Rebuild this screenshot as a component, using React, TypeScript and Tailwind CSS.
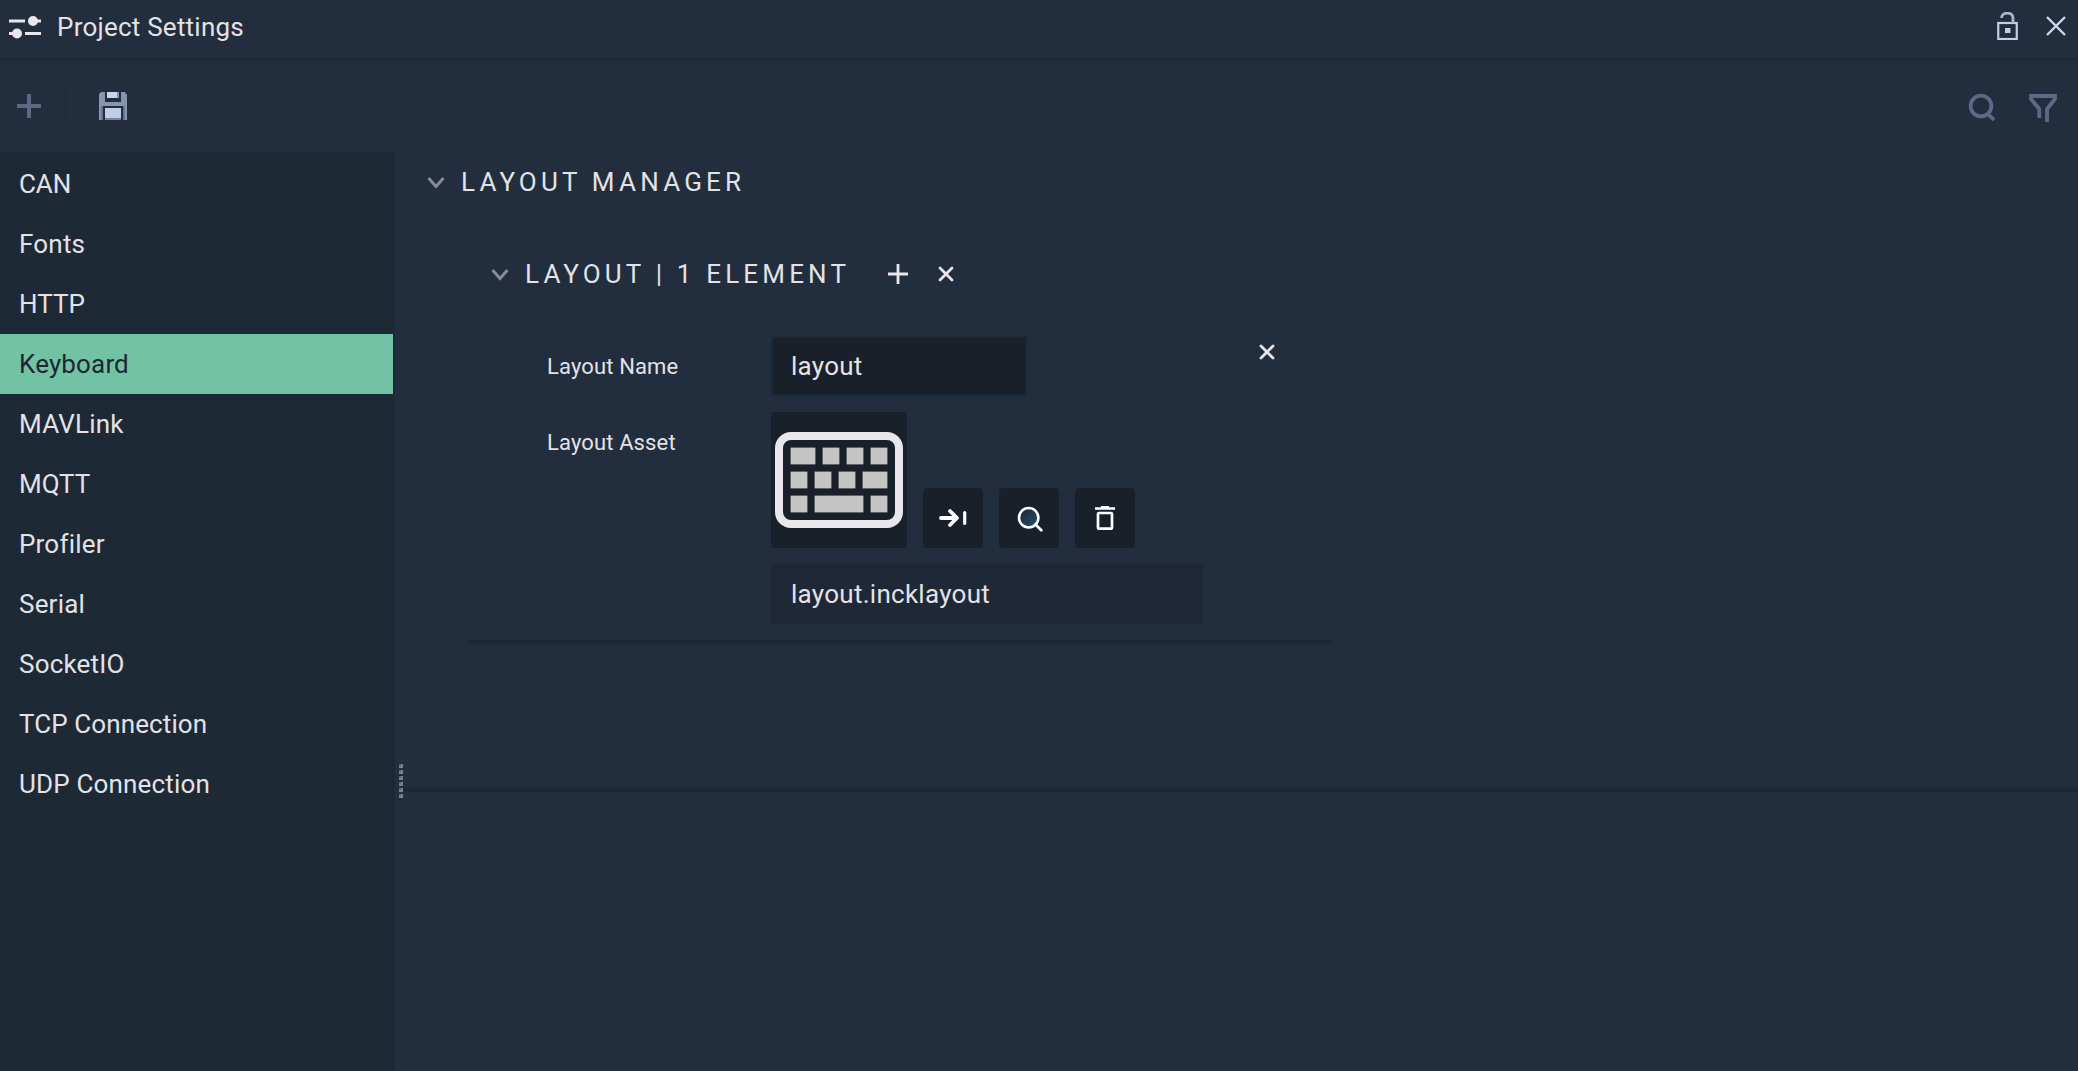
import React from "react";

const items = [
  { label: "CAN", tracking: "tracking-[-0.1px]" },
  { label: "Fonts", tracking: "tracking-[0.2px]" },
  { label: "HTTP", tracking: "" },
  { label: "Keyboard", tracking: "tracking-[0.15px]" },
  { label: "MAVLink", tracking: "tracking-[0.2px]" },
  { label: "MQTT", tracking: "" },
  { label: "Profiler", tracking: "tracking-[0.2px]" },
  { label: "Serial", tracking: "tracking-[0.2px]" },
  { label: "SocketIO", tracking: "tracking-[0.2px]" },
  { label: "TCP Connection", tracking: "tracking-[0.1px]" },
  { label: "UDP Connection", tracking: "tracking-[0.17px]" },
];

const Chevron = () => (
  <svg width="18" height="14" viewBox="0 0 18 14" className="mt-px shrink-0">
    <path d="M1.5 2 L9 10.5 L16.5 2" fill="none" stroke="#868b98" strokeWidth="2.9" />
  </svg>
);

const Cross = () => (
  <svg width="16" height="16" viewBox="0 0 16 16" className="shrink-0">
    <path d="M2 2 L14 14 M14 2 L2 14" stroke="#e9e6ee" strokeWidth="2.8" strokeLinecap="round" />
  </svg>
);

const keys = [
  [0, 0, 24], [32, 0, 16], [56, 0, 16], [80, 0, 16],
  [0, 24, 16], [24, 24, 16], [48, 24, 16], [72, 24, 24],
  [0, 48, 16], [24, 48, 48], [80, 48, 16],
];

const Keyboard = () => (
  <svg width="128" height="96" viewBox="0 0 128 96">
    <rect x="4" y="4" width="120" height="88" rx="12" fill="none" stroke="#e9e6ee" strokeWidth="8" />
    {keys.map(([x, y, w]) => (
      <rect key={`${x}-${y}`} x={15.6 + x} y={15.6 + y} width={w + 0.8} height="16.8" fill="#c5c5c5" />
    ))}
  </svg>
);

export default function App() {
  return (
    <div className="flex h-[1071px] w-[2078px] flex-col overflow-hidden bg-[#222d3d] font-['Roboto',sans-serif] text-[26px] leading-[30px] text-[#e3e2e6]">
      <header className="flex h-[60px] shrink-0 items-center border-b-2 border-[#1e2936] pl-[9px] pr-[12px]">
        <svg width="32" height="24" viewBox="0 0 32 24" className="-mt-1 shrink-0">
          <path d="M0 6h16M28 6h4M0 18.5h4M16 18.5h16" stroke="#e9e6ee" strokeWidth="3" />
          <circle cx="24" cy="6" r="5" fill="#e9e6ee" />
          <circle cx="8" cy="18.5" r="5" fill="#e9e6ee" />
        </svg>
        <h1 className="-mt-1 ml-[16px] flex-1 tracking-[0.23px]">Project Settings</h1>
        <svg width="22" height="28" viewBox="0 0 22 28" className="-mt-1.5 mr-[27px]">
          <rect x="1.25" y="11" width="18.5" height="16" fill="none" stroke="#bfd0ea" strokeWidth="2.2" />
          <rect x="8" y="16" width="5.5" height="5" fill="#bfd0ea" />
          <path d="M4.5 6 C4.5 0 16 -1 16 6 V11" fill="none" stroke="#a9b8d0" strokeWidth="2.8" />
        </svg>
        <svg width="20" height="20" viewBox="0 0 20 20" className="-mt-1.5">
          <path d="M1 1 L19 19 M19 1 L1 19" stroke="#c9daf2" strokeWidth="2.4" />
        </svg>
      </header>
      <div className="flex h-[92px] shrink-0 items-center pl-[17px] pr-[21px]">
        <svg width="24" height="24" viewBox="0 0 24 24">
          <path d="M12 0v24M0 12h24" stroke="#5a6a86" strokeWidth="4" />
        </svg>
        <div className="ml-[28px] h-8 w-1 bg-[#242f40]" />
        <svg width="28" height="28" viewBox="0 0 28 28" className="ml-[26px]">
          <path d="M2 0H6V10H22V0H26L28 3V28H0V2Z" fill="#8796ad" />
          <rect x="6" y="0" width="16" height="8" fill="#222d3d" />
          <rect x="8" y="0" width="10" height="6" fill="#c3d7f0" />
          <rect x="18" y="0" width="2" height="6" fill="#8796ad" />
          <rect x="2" y="14" width="24" height="14" fill="#66758c" />
          <rect x="4" y="14" width="20" height="14" fill="#222d3d" />
          <rect x="6" y="16" width="16" height="10" fill="#bdcfe8" />
          <rect x="6" y="26" width="16" height="2" fill="#75859c" />
        </svg>
        <div className="flex-1" />
        <svg width="28" height="28" viewBox="0 0 28 28" className="mr-[33px] mt-1">
          <circle cx="13" cy="12" r="10.4" fill="none" stroke="#5a6a86" strokeWidth="3.8" />
          <path d="M19.5 19.5 L26 26" stroke="#5a6a86" strokeWidth="3.8" />
        </svg>
        <svg width="28" height="28" viewBox="0 0 28 28" className="mt-1">
          <path d="M10.3 24 V15 L2 5 V2 H26 V5 L18 15 V28" fill="none" stroke="#5a6a86" strokeWidth="3.8" />
        </svg>
      </div>
      <div className="flex min-h-0 flex-1">
        <nav className="w-[395px] shrink-0 rounded-tr bg-[#1e2936] pr-[2px] pt-[2px]">
          {items.map(({ label, tracking }) => (
            <div
              key={label}
              className={`flex h-[60px] items-center pl-[19px] ${tracking} ${label === "Keyboard" ? "bg-[#72c3a5] text-[#1d2731]" : ""}`}
            >
              {label}
            </div>
          ))}
        </nav>
        <div className="flex w-[8px] shrink-0 flex-col items-end gap-[2px] pt-[612px]">
          {[0, 1, 2, 3, 4, 5].map((i) => (
            <div key={i} className="h-1 w-1 bg-[#7b828e]">
              <div className="size-[2px] bg-[#5d6572]" />
            </div>
          ))}
        </div>
        <main className="flex flex-1 flex-col">
          <section className="h-[640px] shrink-0 border-b-4 border-[#1e2936] pl-[24px]">
            <div className="flex h-[60px] items-center">
              <Chevron />
              <h2 className="ml-[16px] tracking-[4.2px]">LAYOUT MANAGER</h2>
            </div>
            <div className="ml-[40px] w-[864px] border-b-4 border-[#1e2936]">
              <div className="mt-[32px] flex h-[60px] items-center pl-[24px]">
                <Chevron />
                <h3 className="ml-[16px] w-[363px] tracking-[4.17px]">LAYOUT | 1 ELEMENT</h3>
                <svg width="20" height="20" viewBox="0 0 20 20">
                  <path d="M10 0v20M0 10h20" stroke="#e9e6ee" strokeWidth="2.8" />
                </svg>
                <div className="ml-[30px]"><Cross /></div>
              </div>
              <div className="mt-[32px] flex pb-4 pl-[80px]">
                <div className="w-[224px] shrink-0 text-[22px] tracking-[0.13px]">
                  <div className="flex h-[60px] items-center pt-px">Layout Name</div>
                  <div className="mt-4 flex h-[60px] items-center pt-px">Layout Asset</div>
                </div>
                <div className="flex w-[488px] flex-col gap-4">
                  <div className="flex h-[60px] w-[256px] items-center border-2 border-[#1e2937] bg-[#1a2029] pl-[18px] tracking-[0.25px]">layout</div>
                  <div className="flex items-end gap-4">
                    <div className="flex size-[136px] items-center justify-center rounded bg-[#1a2029]"><Keyboard /></div>
                    <div className="flex size-[60px] items-center justify-center rounded bg-[#1a2029]">
                      <svg width="28" height="20" viewBox="0 0 28 20">
                        <path d="M2 10H17M11 3L18 10L11 17" fill="none" stroke="#fff" strokeWidth="3.8" strokeLinecap="round" strokeLinejoin="round" />
                        <path d="M25.7 4.5v11" stroke="#fff" strokeWidth="3.2" strokeLinecap="round" />
                      </svg>
                    </div>
                    <div className="flex size-[60px] items-center justify-center rounded bg-[#1a2029]">
                      <svg width="26" height="26" viewBox="0 0 26 26" className="ml-0.5 mt-0.5">
                        <defs>
                          <linearGradient id="lens" x1="0" y1="0" x2="1" y2="1">
                            <stop offset="0.2" stopColor="#222b36" />
                            <stop offset="1" stopColor="#1b567c" />
                          </linearGradient>
                        </defs>
                        <circle cx="11.7" cy="11.7" r="9.7" fill="url(#lens)" stroke="#fff" strokeWidth="2.5" />
                        <path d="M18.5 18.5L24.3 24.3" stroke="#fff" strokeWidth="2.8" strokeLinecap="round" />
                      </svg>
                    </div>
                    <div className="flex size-[60px] items-center justify-center rounded bg-[#1a2029]">
                      <svg width="20" height="24" viewBox="0 0 20 24">
                        <path d="M6 0H14V1.2H20V3.8H0V1.2H6Z" fill="#fff" />
                        <rect x="3" y="7" width="14" height="15.7" rx="1" fill="none" stroke="#fff" strokeWidth="2.7" />
                      </svg>
                    </div>
                  </div>
                  <div className="flex h-[60px] w-[432px] items-center bg-[#1f2837] pl-[20px] tracking-[0.27px]">layout.incklayout</div>
                </div>
                <div className="mt-[8px]"><Cross /></div>
              </div>
            </div>
          </section>
        </main>
      </div>
    </div>
  );
}
